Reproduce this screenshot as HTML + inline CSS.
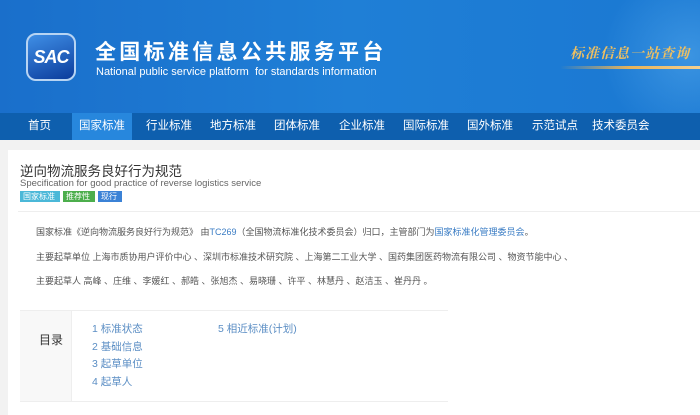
<!DOCTYPE html>
<html><head><meta charset="utf-8"><style>
*{margin:0;padding:0;box-sizing:border-box}
body{width:700px;height:415px;overflow:hidden;background:#f2f2f2;font-family:"Liberation Sans","Noto Sans CJK SC",sans-serif;position:relative}
.hd{position:absolute;left:0;top:0;width:700px;height:113px;background:linear-gradient(90deg,#1a6fcb 0%,#1f7fd6 50%,#1a78d2 100%);overflow:hidden}
.glow{position:absolute;left:590px;top:-20px;width:200px;height:150px;border-radius:50%;background:radial-gradient(circle,rgba(120,200,255,.35),rgba(0,0,0,0) 70%)}
.logo{position:absolute;left:26px;top:33px;width:50px;height:48px;border-radius:10px;background:linear-gradient(160deg,#3f8fe6,#0b3c9c);border:2px solid #b7d4f3;color:#fff;font:italic bold 18px "Liberation Sans",sans-serif;display:flex;align-items:center;justify-content:center;letter-spacing:-1px}
.t1{position:absolute;left:95px;top:36px;color:#fff;font-size:21px;letter-spacing:3.3px;font-weight:bold}
.t2{position:absolute;left:96px;top:66px;color:#fff;font-size:11px}
.slog{position:absolute;left:570px;top:43px;color:#f0c060;font:italic bold 14px "Noto Serif CJK SC",serif;letter-spacing:1px}
.bar{position:absolute;left:560px;top:66px;width:140px;height:3px;background:linear-gradient(90deg,rgba(240,190,100,0),#e6b35a,#f4d090)}
.nav{position:absolute;left:0;top:113px;width:700px;height:27px;background:#0e5fae}
.nav span{position:absolute;top:0;height:27px;line-height:27px;color:#fff;font-size:11.5px}
.nav .on{background:#2787dd;width:60px;text-align:center}
.main{position:absolute;left:8px;top:150px;width:692px;height:265px;background:#fff}
.tt{position:absolute;left:12px;top:10px;font-size:13.5px;color:#333}
.en{position:absolute;left:12px;top:28px;font-size:9.5px;color:#666}
.bd{position:absolute;top:41px;height:11px;font-size:8px;color:#fff;line-height:11px;padding:0 3px}
.hr{position:absolute;left:10px;top:61px;width:682px;height:1px;background:#eee}
.p{position:absolute;left:28px;font-size:9px;color:#555;white-space:nowrap}
.p a{color:#3a7cc4}
.toc{position:absolute;left:12px;top:160px;width:428px;height:92px;border-top:1px solid #eee;border-bottom:1px solid #eee}
.tl{position:absolute;left:0;top:0;width:52px;height:90px;background:#f8f8f8;border-right:1px solid #eee;font-size:12px;color:#333;text-align:right;padding:20px 8px 0 0}
.ti{position:absolute;font-size:10.5px;color:#5b8ec4}
</style></head><body>
<div class="hd"><div class="glow"></div>
<div class="logo">SAC</div>
<div class="t1">全国标准信息公共服务平台</div>
<div class="t2">National public service platform&nbsp; for standards information</div>
<div class="slog">标准信息一站查询</div><div class="bar"></div>
</div>
<div class="nav">
<span style="left:28px">首页</span>
<span class="on" style="left:72px">国家标准</span>
<span style="left:146px">行业标准</span>
<span style="left:210px">地方标准</span>
<span style="left:274px">团体标准</span>
<span style="left:339px">企业标准</span>
<span style="left:403px">国际标准</span>
<span style="left:467px">国外标准</span>
<span style="left:532px">示范试点</span>
<span style="left:592px">技术委员会</span>
</div>
<div class="main">
<div class="tt">逆向物流服务良好行为规范</div>
<div class="en">Specification for good practice of reverse logistics service</div>
<div class="bd" style="left:12px;width:40px;background:#4bb8d8">国家标准</div>
<div class="bd" style="left:55px;width:32px;background:#4cae4c">推荐性</div>
<div class="bd" style="left:90px;width:24px;background:#3b82d6">现行</div>
<div class="hr"></div>
<div class="p" style="top:75px">国家标准《逆向物流服务良好行为规范》 由<a>TC269</a>（全国物流标准化技术委员会）归口，主管部门为<a>国家标准化管理委员会</a>。</div>
<div class="p" style="top:100px">主要起草单位 上海市质协用户评价中心 、深圳市标准技术研究院 、上海第二工业大学 、国药集团医药物流有限公司 、物资节能中心 、</div>
<div class="p" style="top:124px">主要起草人 高峰 、庄维 、李媛红 、郝皓 、张旭杰 、易晓珊 、许平 、林慧丹 、赵洁玉 、崔丹丹 。</div>
<div class="toc">
<div class="tl">目录</div>
<div class="ti" style="left:72px;top:10px">1 标准状态</div>
<div class="ti" style="left:72px;top:28px">2 基础信息</div>
<div class="ti" style="left:72px;top:45px">3 起草单位</div>
<div class="ti" style="left:72px;top:63px">4 起草人</div>
<div class="ti" style="left:198px;top:10px">5 相近标准(计划)</div>
</div>
</div>
</body></html>
